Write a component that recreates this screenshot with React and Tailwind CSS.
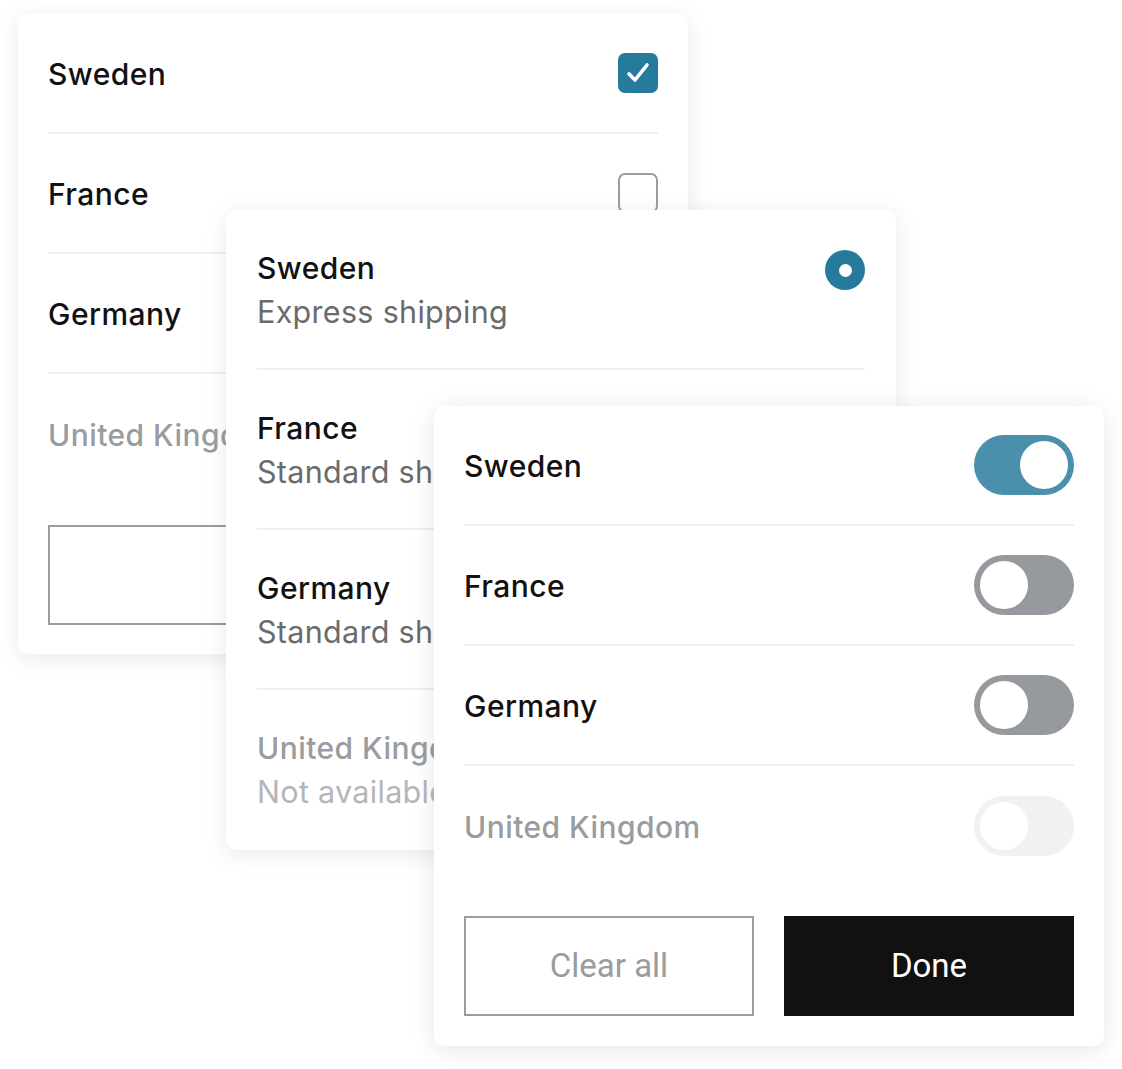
export default function App() {
  const countries = ['Sweden', 'France', 'Germany', 'United Kingdom'];

  const Checkbox = ({ checked }) =>
    checked ? (
      <div className="w-10 h-10 rounded-[7px] bg-[#267a9b] flex items-center justify-center">
        <svg width="28" height="28" viewBox="0 0 28 28" fill="none" stroke="white" strokeWidth="3.6" strokeLinecap="round" strokeLinejoin="round">
          <path d="M5 15l6 6L23 6" />
        </svg>
      </div>
    ) : (
      <div className="w-10 h-10 rounded-[7px] border-2 border-[#9a9ca0] bg-white" />
    );

  const Toggle = ({ state }) => {
    const track =
      state === 'on' ? 'bg-[#4a90ad] justify-end' : state === 'off' ? 'bg-[#96999d] justify-start' : 'bg-[#f0f1f1] justify-start';
    return (
      <div className={`w-[100px] h-[60px] rounded-full p-[6px] flex ${track}`}>
        <div className="w-[48px] h-[48px] rounded-full bg-white" />
      </div>
    );
  };

  const font = "font-['Inter',sans-serif] font-medium text-[30px] tracking-[0.015em]";
  const label = `${font} pt-[3px]`;

  return (
    <div className="relative w-[1122px] h-[1069px] bg-white overflow-hidden">
      {/* Card 1: checkboxes */}
      <div className="absolute left-[18px] top-[14px] w-[670px] h-[640px] bg-white rounded-[10px] shadow-[0_4px_24px_rgba(0,0,0,0.09)] px-[30px] flex flex-col">
        {countries.map((c, i) => (
          <div
            key={c}
            className={`h-[120px] flex items-center justify-between ${i < 3 ? 'border-b-2 border-[#f0f0f0]' : ''}`}
          >
            <span className={`${label} ${i === 3 ? 'text-[#9a9ca0]' : 'text-[#111]'}`}>{c}</span>
            {i < 2 && <Checkbox checked={i === 0} />}
          </div>
        ))}
        <div className="mt-[31px] flex gap-[30px]">
          <div className="w-[290px] h-[100px] border-2 border-[#9a9ca0]" />
        </div>
      </div>

      {/* Card 2: radios with descriptions */}
      <div className="absolute left-[226px] top-[210px] w-[670px] h-[640px] bg-white rounded-[10px] shadow-[0_4px_24px_rgba(0,0,0,0.09)] px-[31px] flex flex-col">
        {[
          ['Sweden', 'Express shipping'],
          ['France', 'Standard shipping'],
          ['Germany', 'Standard shipping'],
          ['United Kingdom', 'Not available'],
        ].map(([c, s], i) => (
          <div
            key={c}
            className={`h-[160px] flex items-start justify-between pt-[38px] ${i < 3 ? 'border-b-2 border-[#f0f0f0]' : ''}`}
          >
            <div className="flex flex-col gap-[4px]">
              <span className={`${font} leading-[40px] ${i === 3 ? 'text-[#9a9ca0]' : 'text-[#111]'}`}>{c}</span>
              <span className={`font-['Inter',sans-serif] text-[30.5px] tracking-[0.01em] leading-[40px] ${i === 3 ? 'text-[#b4b6b9]' : 'text-[#6b6b6b]'}`}>{s}</span>
            </div>
            {i === 0 && (
              <div className="mt-[2px] w-10 h-10 rounded-full bg-[#267a9b] flex items-center justify-center">
                <div className="w-[13px] h-[13px] rounded-full bg-white" />
              </div>
            )}
          </div>
        ))}
      </div>

      {/* Card 3: toggles */}
      <div className="absolute left-[434px] top-[406px] w-[670px] h-[640px] bg-white rounded-[10px] shadow-[0_4px_24px_rgba(0,0,0,0.1)] px-[30px] flex flex-col">
        {countries.map((c, i) => (
          <div
            key={c}
            className={`h-[120px] flex items-center justify-between ${i < 3 ? 'border-b-2 border-[#f0f0f0]' : ''}`}
          >
            <span className={`${label} ${i === 3 ? 'text-[#9a9ca0]' : 'text-[#111]'}`}>{c}</span>
            <Toggle state={i === 0 ? 'on' : i === 3 ? 'disabled' : 'off'} />
          </div>
        ))}
        <div className="mt-[30px] flex gap-[30px]">
          <button className="w-[290px] h-[100px] border-2 border-[#9a9ca0] bg-white font-['Roboto',sans-serif] text-[33px] text-[#9a9ca0]">
            Clear all
          </button>
          <button className="w-[290px] h-[100px] bg-[#111111] font-['Roboto',sans-serif] text-[33px] text-white">
            Done
          </button>
        </div>
      </div>
    </div>
  );
}
